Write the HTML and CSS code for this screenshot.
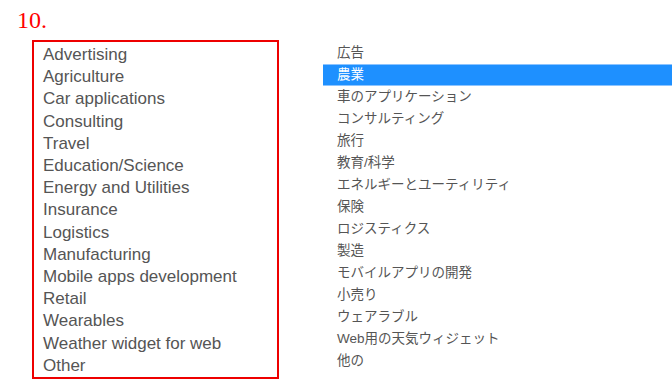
FILE: index.html
```html
<!DOCTYPE html>
<html>
    <head>
        <title>Industries</title>
        <meta charset="utf-8">
        <link rel="stylesheet" href="styles.css">
    </head>
    <body>
        <div class="step">10.</div>

        <div class="lists">
            <ul class="list-en">
                <li>Advertising</li>
                <li>Agriculture</li>
                <li>Car applications</li>
                <li>Consulting</li>
                <li>Travel</li>
                <li>Education/Science</li>
                <li>Energy and Utilities</li>
                <li>Insurance</li>
                <li>Logistics</li>
                <li>Manufacturing</li>
                <li>Mobile apps development</li>
                <li>Retail</li>
                <li>Wearables</li>
                <li>Weather widget for web</li>
                <li>Other</li>
            </ul>

            <ul class="list-ja">
                <li>広告</li>
                <li class="selected">農業</li>
                <li>車のアプリケーション</li>
                <li>コンサルティング</li>
                <li>旅行</li>
                <li>教育/科学</li>
                <li>エネルギーとユーティリティ</li>
                <li>保険</li>
                <li>ロジスティクス</li>
                <li>製造</li>
                <li>モバイルアプリの開発</li>
                <li>小売り</li>
                <li>ウェアラブル</li>
                <li>Web用の天気ウィジェット</li>
                <li>他の</li>
            </ul>
        </div>
    </body>
</html>
```

FILE: styles.css
```css
body {margin: 0px; background: #fff; font-family: "Liberation Sans", Arial, sans-serif; color: #555;}

.step {padding: 6px 0px 0px 17px; height: 34px; font-family: "Liberation Serif", serif; font-size: 24px; line-height: 28px; color: #f00;}

.lists {display: flex; align-items: flex-start;}

ul {list-style: none; margin: 0px; padding: 0px;}

.list-en {width: 234px; margin-left: 32px; padding: 2px 0px 0px 9px; border: 2px solid #e00; font-size: 17px; line-height: 22.2px;}

.list-ja {flex: 1; margin-left: 44px; margin-top: 2px; font-family: "Liberation Sans", "Noto Sans CJK JP", sans-serif; font-size: 13.5px; line-height: 22px;}
.list-ja li {padding-left: 14px;}
.list-ja .selected {background: #1e90ff; color: #fff; box-shadow: inset 0px 1px 0px #8cc4ff, inset 0px -1px 0px #8cc4ff;}
```
